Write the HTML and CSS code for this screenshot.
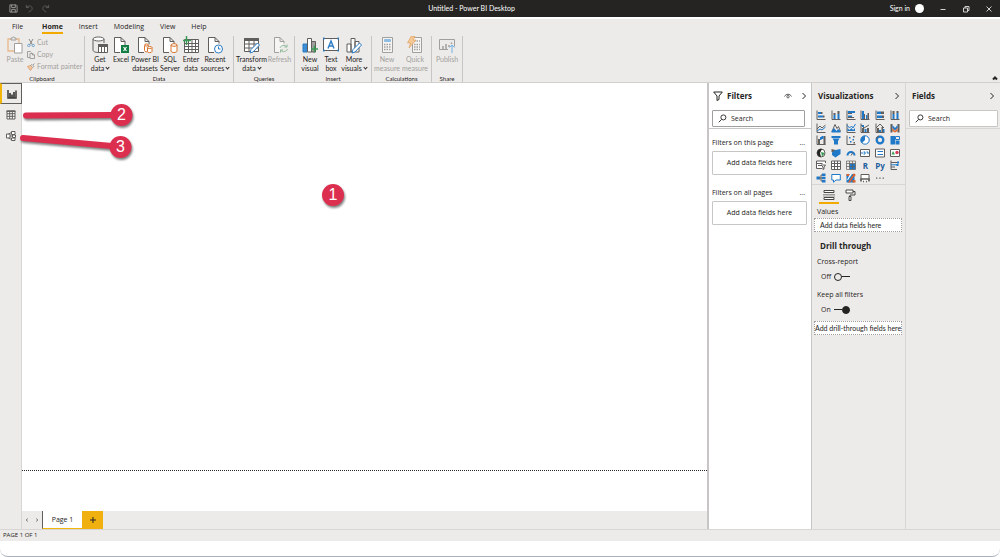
FILE: index.html
```
<!DOCTYPE html>
<html lang="en">
<head>
    <meta charset="UTF-8">
    <meta name="viewport" content="width=device-width, initial-scale=1.0">
    <title>Untitled - Power BI Desktop</title>
    <link rel="stylesheet" href="styles.css">
</head>
<body>
    <div class="window">
        <header class="titlebar">
            <div class="quick">
                <button class="save" aria-label="Save"><svg viewBox="0 0 10 10"><path d="M1 1h7l1 1v7H1zM3 1v3h4V1M3 9V6h4v3"/></svg></button>
                <button class="dim" aria-label="Undo"><svg viewBox="0 0 10 10"><path d="M1.500 1v3h3M1.500 4C4 1 8 2 8 5c0 2-2 3-4 4"/></svg></button>
                <button class="dim" aria-label="Redo"><svg viewBox="0 0 10 10"><path d="M8.500 1v3h-3M8.500 4C6 1 2 2 2 5c0 2 2 3 4 4"/></svg></button>
            </div>
            <h1>Untitled - Power BI Desktop</h1>
            <div class="controls">
                <button class="signin">Sign in <span class="avatar"></span></button>
                <button aria-label="Minimize"><svg viewBox="0 0 8 8"><path d="M1.500 4.500h5"/></svg></button>
                <button aria-label="Restore"><svg viewBox="0 0 8 8"><path d="M1.500 3h4v4h-4zM3 3V1.500h4v4H5.500"/></svg></button>
                <button aria-label="Close"><svg viewBox="0 0 8 8"><path d="M1.500 1.500l5 5M6.500 1.500l-5 5"/></svg></button>
            </div>
        </header>

        <nav class="tabs">
            <button class="file">File</button>
            <button class="active">Home</button>
            <button>Insert</button>
            <button>Modeling</button>
            <button>View</button>
            <button>Help</button>
        </nav>

        <div class="ribbon">
            <section class="group clipboard">
                <div class="tools">
                    <button class="tool off">
                        <svg viewBox="0 0 16 18"><path stroke="#e8b98c" stroke-width="1.300" d="M4 3H1v12h6M9 3h3v4"/><path d="M4 4V2h1.500a1 1 0 0 1 2 0H9v2z"/><path fill="#fff" d="M7.500 7.500h7.500v9.500H7.500z"/></svg>
                        <span>Paste</span>
                    </button>
                    <div class="stack">
                        <button><svg viewBox="0 0 8 8"><path stroke="#8a8886" d="M2 0l3.500 6M6 0L2.500 6"/><circle stroke="#6fa3d2" cx="1.800" cy="6.500" r="1.200"/><circle stroke="#6fa3d2" cx="6.200" cy="6.500" r="1.200"/></svg>Cut</button>
                        <button><svg viewBox="0 0 8 8"><path d="M3 6.500H.5v-6h3l1 1M3 2.500h3l1.500 1.500v3.500H3zM5.500 2.500V4h2"/></svg>Copy</button>
                        <button><svg viewBox="0 0 8 8"><path fill="#f0c7a0" stroke="#dfa273" d="M.5 3.500l3-1 2 2-2 3z"/><path d="M3.500 2.500L5 1.500l2 2-1.500 1M6 2l1.500-1.500"/></svg>Format painter</button>
                    </div>
                </div>
                <h2>Clipboard</h2>
            </section>

            <section class="group data">
                <div class="tools">
                    <button class="tool">
                        <svg viewBox="0 0 16 18"><path d="M1 3v11c0 2 3 2.500 6 2.500M12 3v4"/><ellipse cx="6.500" cy="3" rx="5.500" ry="2" fill="#fff"/><path fill="#fff" d="M6.500 8.500h9v8h-9z"/><path fill="#605e5c" d="M6.500 8.500h9v2h-9z"/><path d="M9.500 10v6M12.500 10v6"/></svg>
                        <span>Get<br>data<i class="caret"></i></span>
                    </button>
                    <button class="tool">
                        <svg viewBox="0 0 16 18"><path fill="#fff" d="M7 16.500H1.500v-15H8L12 5.500v4M8 1.500v4h4"/><path fill="#107c41" stroke="none" d="M8 9h8v8H8z"/><path stroke="#fff" stroke-width="1.200" d="M10.500 11l3 4M13.500 11l-3 4"/></svg>
                        <span>Excel</span>
                    </button>
                    <button class="tool">
                        <svg viewBox="0 0 16 18"><path fill="#fff" d="M7 16.500H1.500v-15H8L12 5.500v3M8 1.500v4h4"/><g fill="#fff" stroke="#d9752e"><path d="M7.500 9.500v5c0 1.500 3 1.500 4 1v-6"/><ellipse cx="9.500" cy="9" rx="2" ry="1"/><path d="M10.500 11.500v4c0 1.500 4.500 1.500 4.500 0v-4"/><ellipse cx="12.700" cy="11.500" rx="2.300" ry="1"/></g></svg>
                        <span>Power BI<br>datasets</span>
                    </button>
                    <button class="tool">
                        <svg viewBox="0 0 16 18"><path fill="#fff" d="M7 16.500H1.500v-15H8L12 5.500v2M8 1.500v4h4"/><g fill="#fff" stroke="#d9752e"><path d="M9 9v6c0 2 6 2 6 0V9"/><ellipse cx="12" cy="9" rx="3" ry="1.300"/></g></svg>
                        <span>SQL<br>Server</span>
                    </button>
                    <button class="tool">
                        <svg viewBox="0 0 16 18"><path fill="#fff" d="M1.500 3.500h14v13h-14z"/><path d="M1.500 7.500h14M1.500 10.500h14M1.500 13.500h14M5.500 3v13M9 3v13M12.500 3v13"/><path stroke="#3a9b56" stroke-width="1.500" d="M3.500 0v9M0 4.500h8"/></svg>
                        <span>Enter<br>data</span>
                    </button>
                    <button class="tool">
                        <svg viewBox="0 0 16 18"><path fill="#fff" d="M7 16.500H1.500v-15H8L12 5.500v2M8 1.500v4h4"/><circle cx="11.500" cy="13" r="4" fill="#fff" stroke="#2b7cc4"/><path stroke="#2b7cc4" d="M11.500 10.500V13h2"/></svg>
                        <span>Recent<br>sources<i class="caret"></i></span>
                    </button>
                </div>
                <h2>Data</h2>
            </section>

            <section class="group queries">
                <div class="tools">
                    <button class="tool">
                        <svg viewBox="0 0 16 18"><path fill="#fff" d="M.5 2.500h14v13H.5z"/><path fill="#605e5c" d="M.5 2.500h14v2H.5z"/><path d="M.5 8h14M.5 12h14M5 4v11M10 4v11"/><path fill="#fff" stroke="#2b7cc4" d="M6 17l1-3.500 6.500-6.500 2 2L9 16z"/></svg>
                        <span>Transform<br>data<i class="caret"></i></span>
                    </button>
                    <button class="tool off">
                        <svg viewBox="0 0 16 18"><path fill="#f6f5f4" d="M7 16.500H2.500v-15H8L12 5.500v2M8 1.500v4h4"/><path stroke="#8fb99a" d="M8 12c1-3 5-3.500 7-1M15 8.500V11h-2.500M15.500 13c-1 3-5 3.500-7 1M8.500 16.500V14H11"/></svg>
                        <span>Refresh</span>
                    </button>
                </div>
                <h2>Queries</h2>
            </section>

            <section class="group insert">
                <div class="tools">
                    <button class="tool">
                        <svg viewBox="0 0 16 18"><path fill="#3f8fd8" stroke="#2b7cc4" d="M1 8h4v8H1z"/><path fill="#fff" d="M5.500 2.500h4v13.500h-4z"/><path fill="#a19f9d" d="M9.500 5.500h4V16h-4z"/><path stroke="#3a9b56" stroke-width="1.500" d="M12.500 9.500v7M9 13h7"/></svg>
                        <span>New<br>visual</span>
                    </button>
                    <button class="tool">
                        <svg viewBox="0 0 16 18"><path fill="#fff" d="M.5 2.500h15v12H.5z"/><path stroke="#2b7cc4" stroke-width="1.400" d="M5 12.500L8 5l3 7.500M6 10h4"/><path stroke="#2b7cc4" stroke-width="2" d="M0 2.500h1.500M14.500 2.500H16M0 14.500h1.500M14.500 14.500H16"/></svg>
                        <span>Text<br>box</span>
                    </button>
                    <button class="tool">
                        <svg viewBox="0 0 16 18"><path fill="#fff" d="M1 8h4v8H1zM5 2.500h4V16H5zM9 5.500h4V16H9z"/><path fill="#fff" stroke="#2b7cc4" d="M6 17l1-3.500 6.500-6.500 2 2L9 16z"/></svg>
                        <span>More<br>visuals<i class="caret"></i></span>
                    </button>
                </div>
                <h2>Insert</h2>
            </section>

            <section class="group calc">
                <div class="tools">
                    <button class="tool off">
                        <svg viewBox="0 0 16 18"><path fill="#f6f5f4" d="M3.500 1.500h10v15h-10z"/><path fill="#8dbbe2" stroke="#8dbbe2" d="M5.500 3.500h6v2h-6z"/><path stroke-width="1.500" stroke-dasharray="1.500 1" d="M5 8.500h7M5 11h7M5 13.500h7"/></svg>
                        <span>New<br>measure</span>
                    </button>
                    <button class="tool off">
                        <svg viewBox="0 0 16 18"><path fill="#f6f5f4" d="M5.500 1.500h9v15h-9z"/><path stroke-width="1.500" stroke-dasharray="1.500 1" d="M7 5h6M7 8.500h6M7 11h6M7 13.500h6"/><path fill="#f5c894" stroke="#e0a062" stroke-width=".7" d="M4 .5h4L6 4h3l-7 8 1.500-5H.5z"/></svg>
                        <span>Quick<br>measure</span>
                    </button>
                </div>
                <h2>Calculations</h2>
            </section>

            <section class="group share">
                <div class="tools">
                    <button class="tool off">
                        <svg viewBox="0 0 16 18"><path d="M9 13.500H.5v-10h15v7"/><path stroke-width="1.500" d="M4 13v-3M7 13V8M10 11V9M12.500 8V6.500"/><path stroke="#6fb1e4" d="M13 17V9M10.500 11.500L13 9l2.500 2.500"/></svg>
                        <span>Publish</span>
                    </button>
                </div>
                <h2>Share</h2>
            </section>
            <button class="collapse" aria-label="Collapse ribbon"><svg viewBox="0 0 6 6"><path d="M1 4.500l2-2 2 2"/></svg></button>
        </div>

        <main class="workspace">
            <nav class="views">
                <button class="active" aria-label="Report view"><svg viewBox="0 0 10 10"><path stroke="#3b3a39" stroke-width="1.500" d="M1 1v8h8V1.500"/><path stroke="#3b3a39" stroke-width="1.700" d="M3 9V4M5 9V5.500M7 9V3"/></svg></button>
                <button aria-label="Data view"><svg viewBox="0 0 10 10"><path fill="#fff" d="M1 1h8v8H1z"/><path stroke-width="1.400" d="M.5 1.200h9"/><path d="M1 3.700h8M1 6.300h8M3.700 1v8M6.300 1v8"/></svg></button>
                <button aria-label="Model view"><svg viewBox="0 0 10 10"><path fill="#fff" d="M5.500 .5h3.500v3H5.500zM6.500 4h3v2.500h-3zM5.500 7h3.500v2.500H5.500zM.5 3h3.500v4H.5z"/><path d="M2.500 3L5.500 1.500M4 5h2.500M2.500 7l3 1.500"/></svg></button>
            </nav>

            <div class="report">
                <div class="canvas"></div>
                <div class="pages">
                    <button class="arrow" aria-label="Previous page"><svg viewBox="0 0 6 6"><path d="M4 1.500L2 3l2 1.500"/></svg></button>
                    <button class="arrow" aria-label="Next page"><svg viewBox="0 0 6 6"><path d="M2 1.500L4 3 2 4.500"/></svg></button>
                    <button class="page">Page 1</button>
                    <button class="add" aria-label="New page"><svg viewBox="0 0 6 6"><path d="M3 0v6M0 3h6"/></svg></button>
                </div>
            </div>

            <aside class="filters">
                <div class="panel-head">
                    <svg class="funnel" viewBox="0 0 10 10"><path d="M.7 1h8.600L6 5v3.500L4 9.500V5z"/></svg>
                    <h3>Filters</h3>
                    <button class="eye" aria-label="Hide filters"><svg viewBox="0 0 8 8"><path d="M.5 4.500C2 1.500 6 1.500 7.500 4.500"/><circle cx="4" cy="4.700" r="1.200"/></svg></button>
                    <button aria-label="Collapse filters"><svg viewBox="0 0 8 8"><path d="M2.500 1l3 3-3 3"/></svg></button>
                </div>
                <label class="search">
                    <svg viewBox="0 0 10 10"><circle cx="6" cy="3.800" r="2.800"/><path d="M4 6L.8 9.200"/></svg>
                    <input type="text" placeholder="Search" aria-label="Search filters">
                </label>
                <div class="wells">
                    <div class="well-head"><h4>Filters on this page</h4><button aria-label="Page filter options">...</button></div>
                    <div class="well">Add data fields here</div>
                    <div class="well-head"><h4>Filters on all pages</h4><button aria-label="Report filter options">...</button></div>
                    <div class="well">Add data fields here</div>
                </div>
            </aside>

            <aside class="visuals">
                <div class="panel-head">
                    <h3>Visualizations</h3>
                    <button aria-label="Collapse visualizations"><svg viewBox="0 0 8 8"><path d="M2.500 1l3 3-3 3"/></svg></button>
                </div>
                <div class="gallery">
                    <button aria-label="Stacked bar chart"><svg viewBox="0 0 10 10"><path class="k" d="M1 .5v9h8.500"/><path class="b" d="M2 2h3v2H2zM2 5.500h5v2H2z"/><path class="g" d="M5 2h1.500v2H5zM7 5.500h1.500v2H7z"/></svg></button>
                    <button aria-label="Stacked column chart"><svg viewBox="0 0 10 10"><path class="k" d="M1 .5v9h8.500"/><path class="b" d="M2.500 5h2v4h-2zM6.500 4h2v5h-2z"/><path class="g" d="M2.500 3h2v2h-2zM6.500 1h2v3h-2z"/></svg></button>
                    <button aria-label="Clustered bar chart"><svg viewBox="0 0 10 10"><path class="k" d="M1 .5v9h8.500"/><path class="b" d="M2 1h7v2H2zM2 5.500h4v1.500H2z"/><path class="g" d="M2 3h4v1H2zM2 7h6v1H2z"/></svg></button>
                    <button aria-label="Clustered column chart"><svg viewBox="0 0 10 10"><path class="k" d="M1 .5v9h8.500"/><path class="b" d="M2 1h2v8H2zM6 5h1.500v4H6z"/><path class="g" d="M4 4h1v5H4zM7.500 3h1.500v6H7.500z"/></svg></button>
                    <button aria-label="100% stacked bar chart"><svg viewBox="0 0 10 10"><path class="k" d="M1 .5v9h8.500"/><path class="b" d="M2 1.500h4v2.500H2zM2 5.500h5v2.500H2z"/><path class="g" d="M6 1.500h3v2.500H6zM7 5.500h2v2.500H7z"/></svg></button>
                    <button aria-label="100% stacked column chart"><svg viewBox="0 0 10 10"><path class="k" d="M1 .5v9h8.500"/><path class="b" d="M2.500 4h2v5h-2zM6.500 3h2v6h-2z"/><path class="g" d="M2.500 1h2v3h-2zM6.500 1h2v2h-2z"/></svg></button>

                    <button aria-label="Line chart"><svg viewBox="0 0 10 10"><path class="k" d="M1 .5v9h8.500M1 6l3-3 2 2 3.500-3"/><path class="l" d="M1 8l3-2 2 1 3.500-3"/></svg></button>
                    <button aria-label="Area chart"><svg viewBox="0 0 10 10"><path class="k" d="M1 8.500l3-7 2 4 1.500-2 2 5"/><path class="b" d="M.5 9.500V8L3 5l2.500 3L7 6l2.500 2v1.500z"/></svg></button>
                    <button aria-label="Stacked area chart"><svg viewBox="0 0 10 10"><path class="k" d="M1 .5v9h8.500"/><path class="l" d="M1 2l2.500 3 2-2L7 5l2.500-4"/><path class="b" d="M1.500 8V5l2 2 2-2L7 7l2-2v3z"/></svg></button>
                    <button aria-label="Line and stacked column chart"><svg viewBox="0 0 10 10"><path class="k" d="M1 .5v9h8.500M1 2l3 3 5-3"/><path class="g" d="M2 5h2v4H2zM7 5h2v4H7z"/><path class="b" d="M4.500 6h2v3h-2zM2 2h2v2H2z"/></svg></button>
                    <button aria-label="Line and clustered column chart"><svg viewBox="0 0 10 10"><path class="k" d="M1 .5v9h8.500M1 5l4-4 4 4"/><path class="g" d="M2 5h2v4H2zM6.500 4h1.500v5H6.500z"/><path class="b" d="M4 7h2v2H4zM8 6h1.500v3H8z"/></svg></button>
                    <button aria-label="Ribbon chart"><svg viewBox="0 0 10 10"><path class="g" d="M.5 1h2v8.500h-2zM7.500 1h2v8.500h-2z"/><path class="b" d="M2.500 2L5 5l2.500-3v3L5 7.500 2.500 5z"/><path class="o" d="M2.500 5L5 8l2.500-3v3L5 9.500 2.500 8z"/></svg></button>

                    <button aria-label="Waterfall chart"><svg viewBox="0 0 10 10"><path class="k" d="M1 .5v9h8.500"/><path class="g" d="M2 4h2v5H2zM7.500 1h2v8.500h-2z"/><path class="b" d="M4 2h1.500v3H4zM5.500 1h2v3h-2z"/></svg></button>
                    <button aria-label="Funnel"><svg viewBox="0 0 10 10"><path class="b" d="M.5 1h9v2h-9zM1.500 3.500h7L7 6H3zM3 6h4v3.500H3z"/></svg></button>
                    <button aria-label="Scatter chart"><svg viewBox="0 0 10 10"><path class="k" d="M1 .5v9h8.500"/><path class="b" d="M3 2h1.500v1.500H3zM6.500 4H8v1.500H6.500zM4 6h1.500v1.500H4z"/><path class="g" d="M7 1h1.500v1.500H7zM7.500 7H9v1.500H7.500z"/></svg></button>
                    <button aria-label="Pie chart"><svg viewBox="0 0 10 10"><circle class="ring" cx="5" cy="5" r="4.200"/><path class="b" d="M5 5V.8A4.200 4.200 0 0 0 2 8z"/></svg></button>
                    <button aria-label="Donut chart"><svg viewBox="0 0 10 10"><circle cx="5" cy="5" r="3.300" fill="none" stroke="#1f78c8" stroke-width="2.300"/><path class="k" d="M1 4a4 4 0 0 1 3-3"/></svg></button>
                    <button aria-label="Treemap"><svg viewBox="0 0 10 10"><path class="b" d="M.5 1h4.500v8.500H.5zM5.500 5.500h4v4h-4z"/><path class="l" d="M5.500 1.500h4v3h-4z"/></svg></button>

                    <button aria-label="Map"><svg viewBox="0 0 10 10"><circle class="w" cx="5" cy="5" r="4"/><path fill="#252423" d="M1 5a4 4 0 0 1 5-4L4 5l1 4C3 9 1 7 1 5z"/><path fill="#3a9b56" d="M5 4l4 1-3 3.500z"/></svg></button>
                    <button aria-label="Filled map"><svg viewBox="0 0 10 10"><path class="g" d="M.5 1l4 1v3l-4-1z"/><path class="b" d="M4.500 2l5-1v5l-5 3.500L1 7V4.500z"/></svg></button>
                    <button aria-label="Gauge"><svg viewBox="0 0 10 10"><path d="M1.500 7.500a3.500 3.500 0 0 1 7 0" fill="none" stroke="#1f78c8" stroke-width="2"/><path class="k" d="M5 7.500l2-3"/></svg></button>
                    <button aria-label="Card"><svg viewBox="0 0 10 10"><path class="w" d="M.5 1.500h9v7h-9z"/><path class="l" d="M2 4v2M3.500 4h1.500v2H3.500M6.500 4H8v2"/></svg></button>
                    <button aria-label="Multi-row card"><svg viewBox="0 0 10 10"><path class="w" d="M.5 1h9v8h-9z"/><path class="l" d="M2.500 3.500H8M2.500 6.500H8"/></svg></button>
                    <button aria-label="KPI"><svg viewBox="0 0 10 10"><path class="w" d="M.5 1.500h9v7h-9z"/><path fill="#3a9b56" d="M1.500 6.500L3 3l2 3.500z"/><circle cx="7" cy="4.500" r="1.700" fill="#d83b5b"/></svg></button>

                    <button aria-label="Slicer"><svg viewBox="0 0 10 10"><path class="w" d="M6 8.500H.5V1h9v2M.5 3.500h6M2 5.500h3"/><path class="k" d="M5 5h4.500L8 7v2L7 9.500V7z"/></svg></button>
                    <button aria-label="Table"><svg viewBox="0 0 10 10"><path class="w" d="M.5 1h9v8.500h-9zM.5 3.500h9M.5 6.500h9M3.500 1v8M6.500 1v8"/></svg></button>
                    <button aria-label="Matrix"><svg viewBox="0 0 10 10"><path class="b" d="M3.500 3.500h6v6h-6z"/><path class="k" stroke-width=".7" d="M.5 1h9v8.500h-9zM.5 3.500h9M.5 6.500h9M3.500 1v8M6.500 1v8"/></svg></button>
                    <button class="script" aria-label="R script visual">R</button>
                    <button class="script" aria-label="Python visual">Py</button>
                    <button aria-label="Key influencers"><svg viewBox="0 0 10 10"><path class="k" d="M1 .5v9h6M1 2.500h6M1 7h4"/><path class="l" d="M1 4.800h6"/><path class="b" d="M7 1.500h2v2H7zM6.500 4h2v2h-2z"/></svg></button>

                    <button aria-label="Decomposition tree"><svg viewBox="0 0 10 10"><path class="b" d="M.5 3.500h3.500v3H.5zM6 .5h3.500v2.500H6zM6 3.800h3.500v2.400H6zM6 7h3.500v2.500H6z"/><path class="k" d="M3 5h3M6 2H5v6h1"/></svg></button>
                    <button aria-label="Q&amp;A"><svg viewBox="0 0 10 10"><path fill="#fff" stroke="#1f78c8" d="M.8 1.500h8.500v5.500H5L2.500 9.200V7H.8z"/></svg></button>
                    <button aria-label="ArcGIS maps"><svg viewBox="0 0 10 10"><path class="b" d="M.5 1h8v8.500h-8z"/><path class="o" d="M2 9.500L6 3h2L4 9.500zM.5 1h3v2h-3zM6.500 7h3v2.500h-3z"/><path fill="#fff" d="M4 1h2L2 7H1z"/><circle cx="8" cy="2" r="1.500" class="o"/></svg></button>
                    <button aria-label="Power Apps"><svg viewBox="0 0 10 10"><path class="w" d="M1 8V1.500h8V8"/><path class="k" stroke-width="1.500" d="M1 8.500V6h8v2.500M3 8.500h1M6 8.500h1"/></svg></button>
                    <button aria-label="More visuals"><svg viewBox="0 0 10 10"><path class="g" d="M1 4.500h1.300v1.300H1zM4.300 4.500h1.300v1.300H4.300zM7.600 4.500h1.300v1.300H7.600z"/></svg></button>
                </div>
                <div class="modes">
                    <button class="active" aria-label="Fields"><svg viewBox="0 0 12 12"><path fill="#fff" d="M1 1.500h10v2H1zM1 8.500h10v2H1z"/><path stroke-dasharray="1 1" d="M.5 5.500h11M.5 7h11"/></svg></button>
                    <button aria-label="Format"><svg viewBox="0 0 12 12"><path fill="#fff" d="M2 1h7v3H2z"/><path d="M9 2.500h2V6H6v1.500M5 7.500h2v4H5z"/></svg></button>
                </div>
                <div class="options">
                    <h4>Values</h4>
                    <div class="drop">Add data fields here</div>
                    <h3>Drill through</h3>
                    <h4>Cross-report</h4>
                    <label class="switch">Off <input type="checkbox" aria-label="Cross-report"></label>
                    <h4>Keep all filters</h4>
                    <label class="switch">On <input type="checkbox" aria-label="Keep all filters" checked></label>
                    <div class="drop">Add drill-through fields here</div>
                </div>
            </aside>

            <aside class="fields">
                <div class="panel-head">
                    <h3>Fields</h3>
                    <button aria-label="Collapse fields"><svg viewBox="0 0 8 8"><path d="M2.500 1l3 3-3 3"/></svg></button>
                </div>
                <label class="search">
                    <svg viewBox="0 0 10 10"><circle cx="6" cy="3.800" r="2.800"/><path d="M4 6L.8 9.200"/></svg>
                    <input type="text" placeholder="Search" aria-label="Search fields">
                </label>
            </aside>
        </main>

        <footer class="status">PAGE 1 OF 1</footer>
    </div>

    <!-- numbered callouts over the window -->
    <svg class="callouts" width="360" height="220" viewBox="0 0 360 220">
        <g class="marks">
            <path d="M26 115.500L112 115M23 138L112 146"/>
            <circle cx="333" cy="195" r="11"/>
            <circle cx="121.500" cy="115" r="11"/>
            <circle cx="120.500" cy="147" r="11"/>
        </g>
        <text x="333" y="200">1</text>
        <text x="121.500" y="120">2</text>
        <text x="120.500" y="152">3</text>
    </svg>
</body>
</html>
```
FILE: styles.css
```
*{
    margin: 0;
    padding: 0;
    box-sizing: border-box;
}
body{
    min-height: 100vh;
    padding-bottom: 15px;
    display: flex;
    flex-direction: column;
    background-color: #fff;
    border-bottom: 1px solid #a9b0bb;
    border-radius: 0 0 8px 8px;
    font-family: "Open Sans", "Noto Sans", sans-serif;
    font-size: 7px;
    line-height: 9px;
    color: #252423;
}
button, input{
    font: inherit;
    color: inherit;
    background: none;
    border: none;
    outline: none;
}
h1, h2, h3, h4{
    font-size: inherit;
    font-weight: normal;
}
svg{
    display: block;
    flex: none;
    fill: none;
    stroke: #605e5c;
}
.window{
    flex: 1;
    display: flex;
    flex-direction: column;
    background-color: #edebe9;
}

/* title bar */
.titlebar{
    height: 17px;
    display: grid;
    grid-template-columns: 1fr auto 1fr;
    align-items: center;
    padding: 0 2px 0 9px;
    background-color: #252423;
    font-family: Lato, "Open Sans", sans-serif;
    color: #fff;
}
.titlebar svg{
    width: 8px;
    height: 8px;
    stroke: #d2d0ce;
}
.titlebar .quick svg{
    width: 9px;
    height: 9px;
    stroke: #a19f9d;
}
.quick, .controls{
    display: flex;
    align-items: center;
}
.quick{
    gap: 7px;
}
.titlebar .dim svg{
    stroke: #605e5c;
}
.titlebar h1{
    padding-right: 64px;
}
.controls{
    justify-content: flex-end;
    gap: 15px;
    padding-right: 5px;
}
.controls button{
    display: flex;
    align-items: center;
    gap: 5px;
}
.avatar{
    width: 9px;
    height: 9px;
    border-radius: 50%;
    background-color: #fff;
}

/* tabs */
.tabs{
    height: 18px;
    display: flex;
    align-items: center;
    gap: 16px;
    padding-left: 12px;
    border-top: 2px solid #fff;
}
.tabs button{
    height: 13px;
    border-bottom: 2px solid transparent;
    font-weight: 500;
}
.tabs .file{
    margin-right: 3px;
}
.tabs .active{
    font-weight: bold;
    border-color: #f2a900;
}

/* ribbon */
.ribbon{
    height: 48px;
    display: flex;
    padding-top: 1px;
    border-bottom: 1px solid #d2d0ce;
    font-family: Lato, "Open Sans", sans-serif;
}
.group{
    display: flex;
    flex-direction: column;
    justify-content: space-between;
    border-right: 1px solid #c8c6c4;
}
.group h2{
    font-size: 6px;
    line-height: 7px;
    text-align: center;
}
.tools{
    display: grid;
    padding: 0 4px;
}
.tool{
    display: flex;
    flex-direction: column;
    align-items: center;
    gap: 1px;
    line-height: 9px;
    white-space: nowrap;
}
.tool svg{
    width: 16px;
    height: 18px;
}
.tool span{
    display: block;
}
.off, .stack{
    color: #a19f9d;
}
.off svg, .stack svg{
    stroke: #a19f9d;
}
.caret{
    display: inline-block;
    width: 3px;
    height: 3px;
    margin: 0 0 2px 2px;
    border-right: 1px solid;
    border-bottom: 1px solid;
    transform: rotate(45deg);
}
.clipboard .tools{ grid-template-columns: 22px 54px; }
.data .tools{ grid-template-columns: 22px 20px 28px 22px 20px 28px; }
.queries .tools{ grid-template-columns: 31px 25px; padding: 0 2px; }
.insert .tools{ grid-template-columns: 24px 18px 28px; padding: 0 3px; }
.calc .tools{ grid-template-columns: 28px 28px; padding: 0 2px 0 1px; }
.share .tools{ grid-template-columns: 22px; }
.stack{
    display: flex;
    flex-direction: column;
    gap: 3px;
    padding: 2px 0 0 1px;
}
.stack button{
    display: flex;
    align-items: center;
    gap: 2px;
    white-space: nowrap;
}
.stack svg{
    width: 8px;
    height: 8px;
}
.collapse{
    margin: auto 2px 1px auto;
}
.collapse svg{
    width: 6px;
    height: 6px;
    stroke: #252423;
    stroke-width: 2px;
}

/* workspace */
.workspace{
    flex: 1;
    display: flex;
}
.views{
    width: 22px;
    border-right: 1px solid #d8d6d4;
}
.views button{
    width: 22px;
    height: 21px;
    display: flex;
    align-items: center;
    justify-content: center;
}
.views .active{
    border: 1px solid #605e5c;
    border-left: 2px solid #f2b60b;
}
.views svg{
    width: 10px;
    height: 10px;
}
.report{
    flex: 1;
    display: flex;
    flex-direction: column;
}
.canvas{
    flex: 1;
    background-color: #fff;
}
.canvas::after{
    content: "";
    display: block;
    height: calc(100% - 41px);
    border-bottom: 1px dotted #252423;
}
.pages{
    height: 18px;
    display: flex;
}
.pages button{
    display: flex;
    align-items: center;
    justify-content: center;
}
.pages .arrow{
    width: 10px;
}
.pages svg{
    width: 6px;
    height: 6px;
    stroke: #8a8886;
}
.pages .page{
    width: 40px;
    background-color: #fff;
    border-left: 1px solid #605e5c;
    border-bottom: 1px solid #f2b60b;
}
.pages .add{
    width: 21px;
    background-color: #f0b010;
}
.pages .add svg{
    stroke: #252423;
}
.status{
    height: 12px;
    padding-left: 3px;
    border-top: 1px solid #d8d6d4;
    font-size: 6px;
    line-height: 11px;
}

/* side panels */
.panel-head{
    height: 25px;
    display: flex;
    align-items: center;
    justify-content: space-between;
}
.panel-head h3, .options h3{
    font-size: 8px;
    font-weight: 700;
}
.panel-head svg{
    width: 8px;
    height: 8px;
    stroke: #252423;
}
.search{
    height: 17px;
    display: flex;
    align-items: center;
    gap: 4px;
    padding-left: 5px;
    background-color: #fff;
    border: 1px solid #a19f9d;
    border-radius: 1px;
}
.search svg{
    width: 9px;
    height: 9px;
    stroke: #252423;
}
.search input{
    width: 100%;
    min-width: 0;
}
.search input::placeholder{
    color: #252423;
}
.filters{
    width: 105px;
    background-color: #fff;
    border-left: 2px solid #c8c6c4;
    border-right: 1px solid #c8c6c4;
}
.filters .panel-head{
    gap: 4px;
    padding: 0 3px 0 4px;
}
.filters .funnel{
    width: 10px;
    height: 10px;
}
.filters .eye{
    margin: 0 4px 0 auto;
}
.filters .eye svg{
    stroke: #605e5c;
}
.filters .search{
    margin: 2px 6px 1px 3px;
}
.wells{
    padding: 9px 4px 0 3px;
    border-top: 1px solid #c8c6c4;
}
.well-head{
    display: flex;
    justify-content: space-between;
    padding-right: 2px;
}
.well{
    height: 24px;
    margin: 4px 0 13px;
    border: 1px solid #c8c6c4;
    border-radius: 1px;
    line-height: 22px;
    text-align: center;
}
.visuals{
    width: 94px;
    border-right: 1px solid #d8d6d4;
}
.visuals .panel-head, .fields .panel-head{
    padding: 0 4px 0 6px;
}
.gallery{
    height: 75px;
    display: grid;
    grid-template-columns: repeat(6, 1fr);
    grid-auto-rows: 1fr;
    margin: 1px 3px 0 2px;
}
.gallery button{
    display: flex;
    align-items: center;
    justify-content: center;
}
.gallery svg{
    width: 10px;
    height: 10px;
    stroke: none;
}
.gallery .k{
    fill: none;
    stroke: #605e5c;
}
.gallery .l{
    fill: none;
    stroke: #1f78c8;
}
.gallery .w{
    fill: #fff;
    stroke: #605e5c;
}
.gallery .ring{
    fill: #fff;
    stroke: #1f78c8;
}
.gallery .b{ fill: #1f78c8; }
.gallery .g{ fill: #605e5c; }
.gallery .o{ fill: #d9622e; }
.gallery .script{
    font-size: 8px;
    font-weight: bold;
    color: #1f5f9f;
}
.modes{
    display: flex;
    gap: 1px;
    padding-left: 7px;
    border-top: 1px solid #d8d6d4;
}
.modes button{
    width: 20px;
    height: 19px;
    display: flex;
    justify-content: center;
    padding-top: 4px;
    border-bottom: 2px solid transparent;
}
.modes .active{
    border-color: #f2a900;
}
.modes svg{
    width: 12px;
    height: 12px;
    stroke: #484644;
}
.options{
    padding: 3px 3px 0 2px;
}
.options h4{
    padding-left: 3px;
}
.options h3{
    padding: 9px 0 7px 6px;
}
.drop{
    height: 14px;
    margin-top: 2px;
    background-color: #fff;
    border: 1px dotted #a19f9d;
    font-family: Lato, "Open Sans", sans-serif;
    line-height: 12px;
    text-align: center;
    white-space: nowrap;
}
.options h4 + .drop{
    padding-left: 5px;
    text-align: left;
}
.switch{
    display: flex;
    align-items: center;
    gap: 3px;
    padding: 6px 0 5px 7px;
}
.switch + h4{
    padding-top: 4px;
}
.switch input{
    appearance: none;
    width: 16px;
    height: 6px;
    display: flex;
    align-items: center;
}
.switch input::before{
    content: "";
    width: 6px;
    height: 6px;
    border: 1px solid #252423;
    border-radius: 50%;
}
.switch input::after{
    content: "";
    flex: 1;
    height: 1px;
    background-color: #252423;
}
.switch input:checked{
    flex-direction: row-reverse;
}
.switch input:checked::before{
    background-color: #252423;
}
.fields{
    width: 94px;
}
.fields .search{
    margin: 2px 2px 1px 3px;
    border-color: #c8c6c4;
}
.fields::after{
    content: "";
    display: block;
    border-top: 1px solid #d8d6d4;
}

/* callouts */
.callouts{
    position: absolute;
    top: 0;
    left: 0;
    pointer-events: none;
}
.marks{
    fill: #dc2f4f;
    stroke: none;
    filter: drop-shadow(1px 2px 1px rgba(0, 0, 0, 0.5));
}
.marks path{
    stroke: #dc2f4f;
    stroke-width: 6px;
    stroke-linecap: round;
}
.callouts text{
    font-family: "Liberation Sans", sans-serif;
    font-size: 16px;
    fill: #fff;
    stroke: none;
    text-anchor: middle;
}
```
